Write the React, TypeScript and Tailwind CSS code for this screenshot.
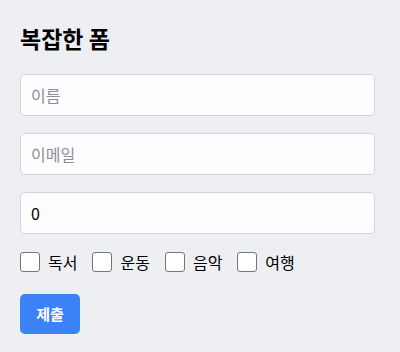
import React from "react";

export default function App() {
  const font = { fontFamily: '"Noto Sans CJK KR", "Noto Sans", sans-serif' };
  const items = ["독서", "운동", "음악", "여행"];
  return (
    <div className="min-h-[352px] w-[400px] bg-[#eeeff3] px-5 pt-5" style={font}>
      <h2 className="mt-[2px] text-[23px] font-bold leading-[33px] text-black">복잡한 폼</h2>
      <div className="mt-[19px] flex flex-col gap-[17px]">
        <input
          className="h-[42px] w-[355px] rounded-[5px] border border-[#d4d4d8] bg-[#fdfcff] px-[10px] text-[16px] text-black placeholder:text-[#8e8e93] outline-none"
          placeholder="이름"
        />
        <input
          className="h-[42px] w-[355px] rounded-[5px] border border-[#d4d4d8] bg-[#fdfcff] px-[10px] text-[16px] text-black placeholder:text-[#8e8e93] outline-none"
          placeholder="이메일"
        />
        <input
          className="h-[42px] w-[355px] rounded-[5px] border border-[#d4d4d8] bg-[#fdfcff] px-[10px] text-[16px] text-black outline-none"
          defaultValue="0"
        />
      </div>
      <div className="mt-[18px] flex items-center gap-[15px]">
        {items.map((t) => (
          <label key={t} className="flex items-center gap-[8px] text-[16px] text-black">
            <span className="block h-[20px] w-[20px] rounded-[3px] border border-[#767676] bg-white" />
            <span className="leading-[20px]">{t}</span>
          </label>
        ))}
      </div>
      <button className="mt-[22px] flex h-[40px] w-[60px] items-center justify-center rounded-[5px] bg-[#3a82f6] text-[15px] font-bold text-white">
        제출
      </button>
    </div>
  );
}
